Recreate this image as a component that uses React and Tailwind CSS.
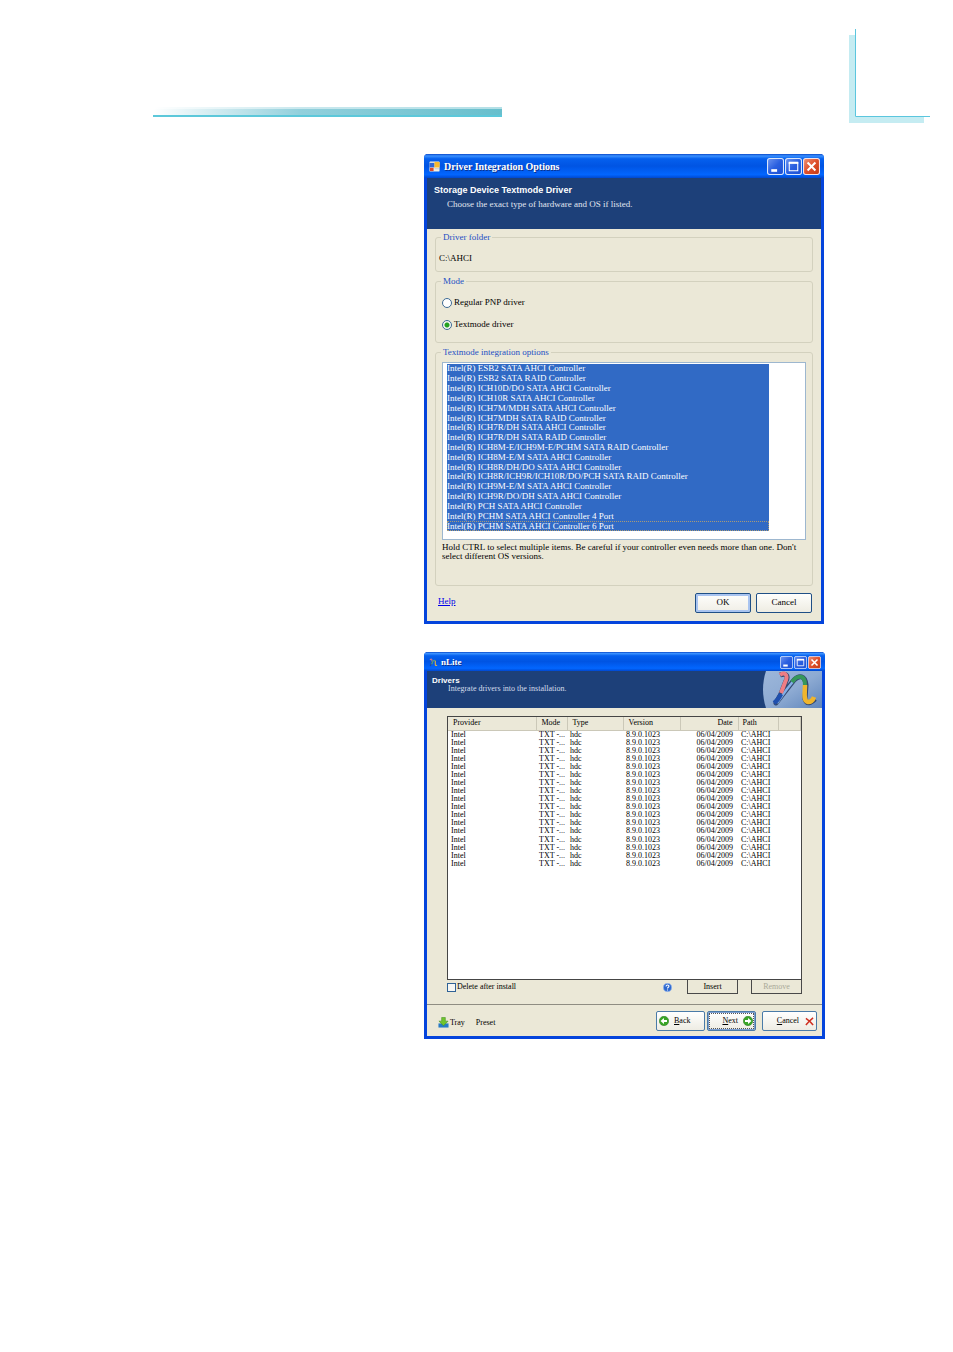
import React from "react";

const controllers = [
  "Intel(R) ESB2 SATA AHCI Controller",
  "Intel(R) ESB2 SATA RAID Controller",
  "Intel(R) ICH10D/DO SATA AHCI Controller",
  "Intel(R) ICH10R SATA AHCI Controller",
  "Intel(R) ICH7M/MDH SATA AHCI Controller",
  "Intel(R) ICH7MDH SATA RAID Controller",
  "Intel(R) ICH7R/DH SATA AHCI Controller",
  "Intel(R) ICH7R/DH SATA RAID Controller",
  "Intel(R) ICH8M-E/ICH9M-E/PCHM SATA RAID Controller",
  "Intel(R) ICH8M-E/M SATA AHCI Controller",
  "Intel(R) ICH8R/DH/DO SATA AHCI Controller",
  "Intel(R) ICH8R/ICH9R/ICH10R/DO/PCH SATA RAID Controller",
  "Intel(R) ICH9M-E/M SATA AHCI Controller",
  "Intel(R) ICH9R/DO/DH SATA AHCI Controller",
  "Intel(R) PCH SATA AHCI Controller",
  "Intel(R) PCHM SATA AHCI Controller 4 Port",
  "Intel(R) PCHM SATA AHCI Controller 6 Port",
];

const drivers = Array.from({ length: 17 }, (_, id) => ({
  id,
  provider: "Intel",
  mode: "TXT -...",
  type: "hdc",
  version: "8.9.0.1023",
  date: "06/04/2009",
  path: "C:\\AHCI",
}));

function WindowButtons({ className }) {
  return (
    <div className={`flex gap-px ${className}`}>
      <button aria-label="Minimize" className="aspect-square h-full">
        <svg viewBox="0 0 16 16" className="h-full w-full">
          <rect x="0.5" y="0.5" width="15" height="15" rx="2" fill="url(#captionBlue)" stroke="#dbe6fb" />
          <rect x="4" y="10.5" width="5.5" height="2.5" fill="#fff" />
        </svg>
      </button>
      <button aria-label="Maximize" className="aspect-square h-full">
        <svg viewBox="0 0 16 16" className="h-full w-full">
          <rect x="0.5" y="0.5" width="15" height="15" rx="2" fill="url(#captionBlue)" stroke="#dbe6fb" />
          <path d="M4 4.5h8v7.500H4z" fill="none" stroke="#fff" />
          <path d="M3.500 4.500h9" stroke="#fff" strokeWidth="2" />
        </svg>
      </button>
      <button aria-label="Close" className="aspect-square h-full">
        <svg viewBox="0 0 16 16" className="h-full w-full">
          <rect x="0.5" y="0.5" width="15" height="15" rx="2" fill="url(#captionRed)" stroke="#f3e3ea" />
          <path d="M4.300 4.300l7.400 7.400M11.700 4.300l-7.400 7.400" stroke="#fff" strokeWidth="1.900" />
        </svg>
      </button>
    </div>
  );
}

function Frame({ label, className = "", titleClass, icon, buttonsClass, children }) {
  return (
    <section
      aria-label={label}
      className={`flex flex-col rounded-t-[4px] border-x-[3px] border-b-[3px] border-[#0444dc] bg-[#ebe8d7] ${className}`}
    >
      <div
        className={`-mx-[3px] flex items-center rounded-t-[4px] bg-[linear-gradient(#0a49c8_0%,#3a91ff_8%,#0560ee_20%,#0054e3_50%,#0266ff_86%,#0048d0_100%)] pr-1 pl-[5px] ${titleClass}`}
      >
        {icon}
        <h2 className="grow font-bold text-white [text-shadow:1px_1px_#0a318f]">{label}</h2>
        <WindowButtons className={buttonsClass} />
      </div>
      {children}
    </section>
  );
}

function GroupBox({ title, className, children }) {
  return (
    <fieldset className={`rounded-[3px] border border-[#d3d1be] ${className}`}>
      <legend className="ml-[5px] px-[2px] text-[9px] leading-[10px] text-[#1c4fc4]">{title}</legend>
      {children}
    </fieldset>
  );
}

function ModeOption({ id, label, defaultChecked }) {
  return (
    <div className="flex h-[22px] items-center gap-[2px]">
      <input
        id={id}
        type="radio"
        name="mode"
        defaultChecked={defaultChecked}
        className="h-[10px] w-[10px] appearance-none rounded-full border border-[#3d6a94] bg-white checked:bg-[radial-gradient(circle,#21a121_0_2px,#f4f6f2_3px)]"
      />
      <label htmlFor={id}>{label}</label>
    </div>
  );
}

function DriverOptionsDialog() {
  return (
    <Frame
      label="Driver Integration Options"
      className="mr-px"
      titleClass="h-[24px] text-[10px]"
      buttonsClass="h-[17px]"
      icon={
        <svg viewBox="0 0 12 12" className="mr-1 h-[11px] w-[11px]" aria-hidden="true">
          <rect x="0.500" y="0.500" width="11" height="11" rx="1" fill="#f4f0df" />
          <rect x="0.500" y="2" width="5.500" height="5" fill="#2f67d8" />
          <rect x="1" y="7.500" width="4" height="3.500" fill="#d94a2b" />
          <rect x="6" y="1" width="5.500" height="6" fill="#f7b92d" />
          <rect x="6" y="8" width="5" height="1" fill="#b9c7df" />
        </svg>
      }
    >
      <header className="h-[51px] bg-[#1d4079] px-[7px] pt-[6px]">
        <h3 className="font-['Liberation_Sans',sans-serif] text-[9px] leading-[12px] font-bold text-white">
          Storage Device Textmode Driver
        </h3>
        <p className="pl-[13px] pt-[2px] text-[9px] leading-[12px] text-[#e0e6f0]">
          Choose the exact type of hardware and OS if listed.
        </p>
      </header>

      <form className="flex flex-col gap-[4px] px-[8px] pt-[3px] pb-[8px] text-[9px] text-black" onSubmit={(e) => e.preventDefault()}>
        <GroupBox title="Driver folder" className="h-[40px]">
          <p className="px-[3px] pt-[10px] leading-[12px]">C:\AHCI</p>
        </GroupBox>

        <GroupBox title="Mode" className="h-[67px]">
          <div className="px-[6px] pt-[6px]">
            <ModeOption id="pnp" label="Regular PNP driver" />
            <ModeOption id="textmode" label="Textmode driver" defaultChecked />
          </div>
        </GroupBox>

        <GroupBox title="Textmode integration options" className="h-[239px]">
          <div className="mx-[6px] mt-[5px] h-[178px] border border-[#9db7cf] bg-white pt-px pr-[36px] pl-[4px]">
            <ul
              role="listbox"
              aria-label="Textmode integration options"
              aria-multiselectable="true"
              className="grid h-[167px] auto-rows-fr bg-[#316ac5] text-white"
            >
              {controllers.map((name) => (
                <li
                  key={name}
                  role="option"
                  aria-selected="true"
                  className="flex items-center leading-none whitespace-nowrap last:outline last:-outline-offset-1 last:outline-dotted last:outline-[#a79a78]"
                >
                  {name}
                </li>
              ))}
            </ul>
          </div>
          <p className="px-[6px] pt-[3px] leading-[9px]">
            Hold CTRL to select multiple items. Be careful if your controller even needs more than one. Don't
            select different OS versions.
          </p>
        </GroupBox>

        <div className="flex items-center gap-[5px] pt-[3px] pr-px pl-[3px]">
          <a href="#help" className="mb-[2px] grow text-[#0000e8] underline">Help</a>
          <button className="h-[20px] w-[56px] rounded-[2px] border border-[#1f4f86] bg-[linear-gradient(#fefefc,#f0eee6)] shadow-[inset_0_0_0_2px_#a9c4f0]">
            OK
          </button>
          <button className="h-[20px] w-[56px] rounded-[2px] border border-[#1f4f86] bg-[linear-gradient(#fefefc,#eeece2)]">
            Cancel
          </button>
        </div>
      </form>
    </Frame>
  );
}

function NLiteLogo() {
  return (
    <svg viewBox="0 0 60 37" className="h-[37px] w-[60px]" role="img" aria-label="nLite">
      <defs>
        <linearGradient id="logoSky" x1="0" y1="0" x2="1" y2="1">
          <stop offset="0" stopColor="#9db7da" />
          <stop offset="0.500" stopColor="#8eabd3" />
          <stop offset="1" stopColor="#5f85bb" />
        </linearGradient>
      </defs>
      <path d="M4 0C0 12 0 25 4 37H60V0Z" fill="url(#logoSky)" />
      <g fill="none" strokeLinejoin="round">
        <path d="M18 4C23 2 27 4 24 10L19 23L14 32L32 9C37 4 43 4 44 14L43 28C45 34 49 32 53 28" stroke="#33486f" strokeWidth="5" />
        <path d="M15 32L25 18L33 8" stroke="#82aee6" strokeWidth="2.500" />
        <path d="M18 4C22 1 26 3 24 9L19 22" stroke="#ee7d84" strokeWidth="4" />
        <path d="M19 23C17 27 15 30 12 32" stroke="#1f4fae" strokeWidth="4.500" />
        <path d="M30 11C35 4 43 3 43 14" stroke="#36975a" strokeWidth="4" />
        <path d="M43 14C43 22 41 30 46 31C49 31 51 29 52 26" stroke="#f0b52d" strokeWidth="4.500" />
      </g>
    </svg>
  );
}

function ArrowBadge({ back }) {
  return (
    <svg viewBox="0 0 10 10" className={`h-[10px] w-[10px] ${back ? "rotate-180" : ""}`} aria-hidden="true">
      <circle cx="5" cy="5" r="4.700" fill="#39a527" stroke="#23751b" strokeWidth="0.500" />
      <path d="M2 4h3V2l3.500 3L5 8V6H2z" fill="#fff" />
    </svg>
  );
}

const navButton =
  "flex h-[20px] items-center rounded-[2px] border border-[#4a7ba8] bg-[linear-gradient(#ffffff,#eeece3)]";

function NLiteWindow() {
  return (
    <Frame
      label="nLite"
      titleClass="h-[19px] pt-[2px] text-[9px]"
      buttonsClass="h-[13px]"
      icon={
        <svg viewBox="0 0 10 10" className="mr-[3px] h-[9px] w-[9px]" aria-hidden="true">
          <g fill="none" strokeWidth="1.300">
            <path d="M1 2q3-2 2 2" stroke="#c77b8d" />
            <path d="M3 4L1.500 9" stroke="#224da0" />
            <path d="M3 7Q5 1 7 3" stroke="#58a577" />
            <path d="M7 3v4q0 2 2 1" stroke="#d8ae4b" />
          </g>
        </svg>
      }
    >
      <header className="flex h-[37px] justify-between bg-[#1d4079] pl-[5px]">
        <div className="pt-[5px]">
          <h3 className="font-['Liberation_Sans',sans-serif] text-[8px] leading-[9px] font-bold text-white">Drivers</h3>
          <p className="pl-[16px] text-[8px] leading-[8px] text-[#d5deec]">Integrate drivers into the installation.</p>
        </div>
        <NLiteLogo />
      </header>

      <div className="px-[20px] pt-[8px] text-[8px] text-black">
        <div className="h-[264px] border border-[#454545] bg-white">
          <table className="w-full table-fixed border-collapse text-left leading-[8px]">
            <colgroup>
              <col className="w-[88px]" />
              <col className="w-[31px]" />
              <col className="w-[56px]" />
              <col className="w-[57px]" />
              <col className="w-[58px]" />
              <col className="w-[40px]" />
              <col />
            </colgroup>
            <thead>
              <tr className="h-[13px] bg-[#ebe8d8] [&>th]:border-r [&>th]:border-b [&>th]:border-[#cbc8b8] [&>th]:py-0 [&>th]:pl-[5px] [&>th]:font-normal">
                <th>Provider</th>
                <th>Mode</th>
                <th>Type</th>
                <th>Version</th>
                <th className="pr-[5px] text-right">Date</th>
                <th className="!pl-[4px]">Path</th>
                <th aria-hidden="true" />
              </tr>
            </thead>
            <tbody className="h-[138px]">
              {drivers.map((d) => (
                <tr key={d.id} className="[&>td]:py-0 [&>td]:pl-[3px] [&>td]:whitespace-nowrap">
                  <td>{d.provider}</td>
                  <td>{d.mode}</td>
                  <td>{d.type}</td>
                  <td>{d.version}</td>
                  <td className="pr-[5px] text-right">{d.date}</td>
                  <td>{d.path}</td>
                  <td />
                </tr>
              ))}
            </tbody>
          </table>
        </div>

        <div className="flex h-[24px] items-start">
          <div className="flex grow items-center gap-px pt-[2px]">
            <input
              id="delete-after"
              type="checkbox"
              className="h-[9px] w-[9px] appearance-none border border-[#2f6296] bg-[#f7f7f3] checked:bg-[#21a121]"
            />
            <label htmlFor="delete-after" className="leading-[10px]">Delete after install</label>
          </div>
          <button aria-label="Help" className="mt-[3px] mr-[15px]">
            <svg viewBox="0 0 10 10" className="h-[9px] w-[9px]">
              <circle cx="5" cy="5" r="4.500" fill="#2b67cf" stroke="#8eb1ea" />
              <path d="M3.400 3.800C3.400 1.700 6.700 1.900 6.600 3.700C6.600 4.800 5 4.700 5 6.200M5 7.200v1" fill="none" stroke="#fff" strokeWidth="1.200" />
            </svg>
          </button>
          <button className="mr-[13px] h-[14px] w-[51px] border-r border-b border-l border-[#494949] leading-[10px]">Insert</button>
          <button disabled className="h-[14px] w-[51px] border-r border-b border-l border-[#494949] leading-[10px] text-[#aaa899]">
            Remove
          </button>
        </div>
      </div>

      <footer className="flex items-center border-t border-[#8f8d82] px-[5px] pt-[6px] pb-[5px] text-[8px] text-black">
        <button className="ml-[6px] flex items-center gap-px pt-[3px]">
          <svg viewBox="0 0 12 12" className="h-[11px] w-[11px]" aria-hidden="true">
            <path d="M0.500 7H11.500V11.500H0.500z" fill="#267bc5" />
            <path d="M4 0.500h4v4h3L6 9.500L1 4.500H4z" fill="#70c52c" stroke="#3f8d20" strokeWidth="0.600" />
          </svg>
          Tray
        </button>
        <button className="ml-[11px] grow pt-[3px] text-left">Preset</button>
        <button className={`${navButton} w-[49px] gap-[5px] pl-[2px]`}>
          <ArrowBadge back />
          <span><u>B</u>ack</span>
        </button>
        <button className={`${navButton} ml-[2px] w-[49px] justify-end gap-[5px] pr-[2px] shadow-[inset_0_0_0_1px_#7d9fd0] outline-1 -outline-offset-3 outline-dotted outline-[#555]`}>
          <span><u>N</u>ext</span>
          <ArrowBadge />
        </button>
        <button className={`${navButton} ml-[6px] w-[55px] justify-end gap-[6px] pr-[2px]`}>
          <span><u>C</u>ancel</span>
          <svg viewBox="0 0 10 10" className="h-[9px] w-[9px]" aria-hidden="true">
            <path d="M1 1.500Q5 4 9 9M9 1Q5 4 1 9" fill="none" stroke="#cf2f20" strokeWidth="1.700" />
          </svg>
        </button>
      </footer>
    </Frame>
  );
}

export default function App() {
  return (
    <div className="min-h-screen bg-white font-['Liberation_Serif',serif]">
      <svg className="absolute h-0 w-0" aria-hidden="true">
        <defs>
          <linearGradient id="captionBlue" x1="0" y1="0" x2="1" y2="1">
            <stop offset="0" stopColor="#6d94f0" />
            <stop offset="0.500" stopColor="#2a5fe0" />
            <stop offset="1" stopColor="#1c4fd2" />
          </linearGradient>
          <linearGradient id="captionRed" x1="0" y1="0" x2="1" y2="1">
            <stop offset="0" stopColor="#ee9478" />
            <stop offset="0.500" stopColor="#de4f2b" />
            <stop offset="1" stopColor="#c63a12" />
          </linearGradient>
        </defs>
      </svg>

      <div className="flex items-start justify-between pt-[29px] pr-[23px] pl-[153px]" aria-hidden="true">
        <div className="mt-[78px] h-[10px] w-[349px] border-b-2 border-[#5cc8da] bg-[linear-gradient(90deg,#ffffff_0%,#92d0dc_42%,#67bfcd_100%)]">
          <div className="h-[2px] bg-white/50" />
        </div>
        <svg viewBox="0 0 81 94" className="h-[94px] w-[81px]">
          <path d="M0 6H6V88H75V94H0Z" fill="#c5ecf2" />
          <path d="M6.500 0V87.500H81" fill="none" stroke="#5bc6de" />
        </svg>
      </div>

      <main className="flex flex-col gap-[28px] pt-[31px] pr-[128px] pb-[40px] pl-[424px]">
        <DriverOptionsDialog />
        <NLiteWindow />
      </main>
    </div>
  );
}
